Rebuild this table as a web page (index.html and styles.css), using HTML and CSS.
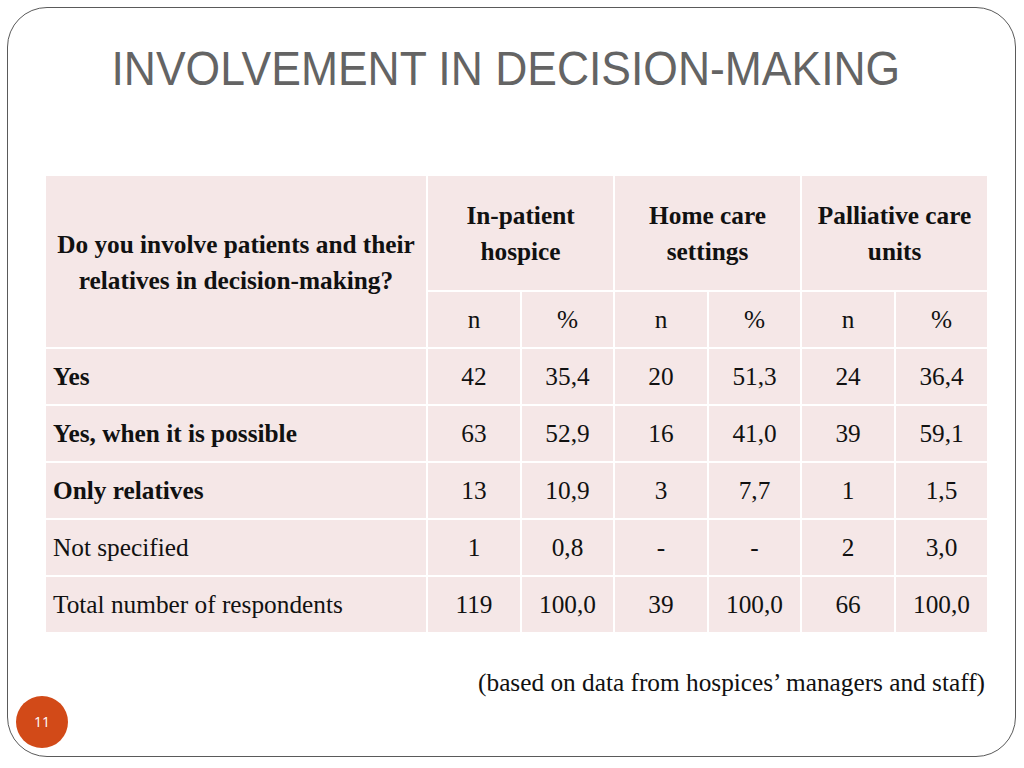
FILE: index.html
```html
<!DOCTYPE html>
<html lang="en">
<head>
<meta charset="utf-8">
<title>Involvement in decision-making</title>
<link rel="stylesheet" href="styles.css">
</head>
<body>
<div class="slide">
  <h1 class="title"><span class="title-text">INVOLVEMENT IN DECISION-MAKING</span></h1>
  <table class="data">
    <colgroup>
      <col class="c-q">
      <col class="c-n"><col class="c-p">
      <col class="c-n"><col class="c-p">
      <col class="c-n"><col class="c-p">
    </colgroup>
    <thead>
      <tr class="r-head">
        <th rowspan="2" class="q">Do you involve patients and their relatives in decision-making?</th>
        <th colspan="2">In-patient<br>hospice</th>
        <th colspan="2">Home care<br>settings</th>
        <th colspan="2">Palliative care<br>units</th>
      </tr>
      <tr class="r-sub">
        <td>n</td><td>%</td><td>n</td><td>%</td><td>n</td><td>%</td>
      </tr>
    </thead>
    <tbody>
      <tr><td class="lbl b">Yes</td><td>42</td><td>35,4</td><td>20</td><td>51,3</td><td>24</td><td>36,4</td></tr>
      <tr><td class="lbl b">Yes, when it is possible</td><td>63</td><td>52,9</td><td>16</td><td>41,0</td><td>39</td><td>59,1</td></tr>
      <tr><td class="lbl b">Only relatives</td><td>13</td><td>10,9</td><td>3</td><td>7,7</td><td>1</td><td>1,5</td></tr>
      <tr><td class="lbl">Not specified</td><td>1</td><td>0,8</td><td>-</td><td>-</td><td>2</td><td>3,0</td></tr>
      <tr><td class="lbl">Total number of respondents</td><td>119</td><td>100,0</td><td>39</td><td>100,0</td><td>66</td><td>100,0</td></tr>
    </tbody>
  </table>
  <p class="note">(based on data from hospices’ managers and staff)</p>
  <div class="page-num">11</div>
</div>
</body>
</html>
```

FILE: styles.css
```css
html, body {
  margin: 0;
  padding: 0;
  background: #ffffff;
}

.slide {
  position: relative;
  box-sizing: border-box;
  margin: 7px;
  width: 1009px;
  height: 750px;
  border: 1px solid #5a5a5a;
  border-radius: 40px;
  padding: 37px 30px 0 36px;
}

.title {
  margin: 0 18px 81px 0;
  font-family: "Liberation Sans", Arial, sans-serif;
  font-weight: normal;
  font-size: 48px;
  line-height: 48px;
  height: 48px;
  color: #646464;
  text-align: center;
  white-space: nowrap;
}

.title-text {
  display: inline-block;
  transform: scaleX(0.926);
  transform-origin: center;
}

.data {
  border-collapse: collapse;
  table-layout: fixed;
  width: 944px;
  font-family: "Times New Roman", "Liberation Serif", Tinos, Times, serif;
  font-size: 25.3px;
  color: #111111;
}

.c-q { width: 382px; }
.c-n { width: 94px; }
.c-p { width: 93px; }

.data th,
.data td {
  background: #f5e7e7;
  border: 2px solid #ffffff;
  text-align: center;
  vertical-align: middle;
  padding: 0;
}

.data th {
  font-weight: bold;
  line-height: 36px;
}

.data th.q {
  padding: 0 6px;
}

.r-head { height: 116px; }
.r-sub { height: 57px; }
.data tbody tr { height: 57px; }

.data td.lbl {
  text-align: left;
  padding-left: 7px;
}

.data td.b {
  font-weight: bold;
}

.note {
  margin: 33px 0 0 0;
  font-family: "Times New Roman", "Liberation Serif", Tinos, Times, serif;
  font-size: 25.3px;
  line-height: 30px;
  color: #111111;
  text-align: right;
}

.page-num {
  position: absolute;
  left: 8px;
  top: 688px;
  width: 52px;
  height: 52px;
  border-radius: 50%;
  background: #d24a18;
  color: #ffffff;
  font-family: "Open Sans", "Liberation Sans", sans-serif;
  font-size: 14px;
  line-height: 52px;
  text-align: center;
}
```
